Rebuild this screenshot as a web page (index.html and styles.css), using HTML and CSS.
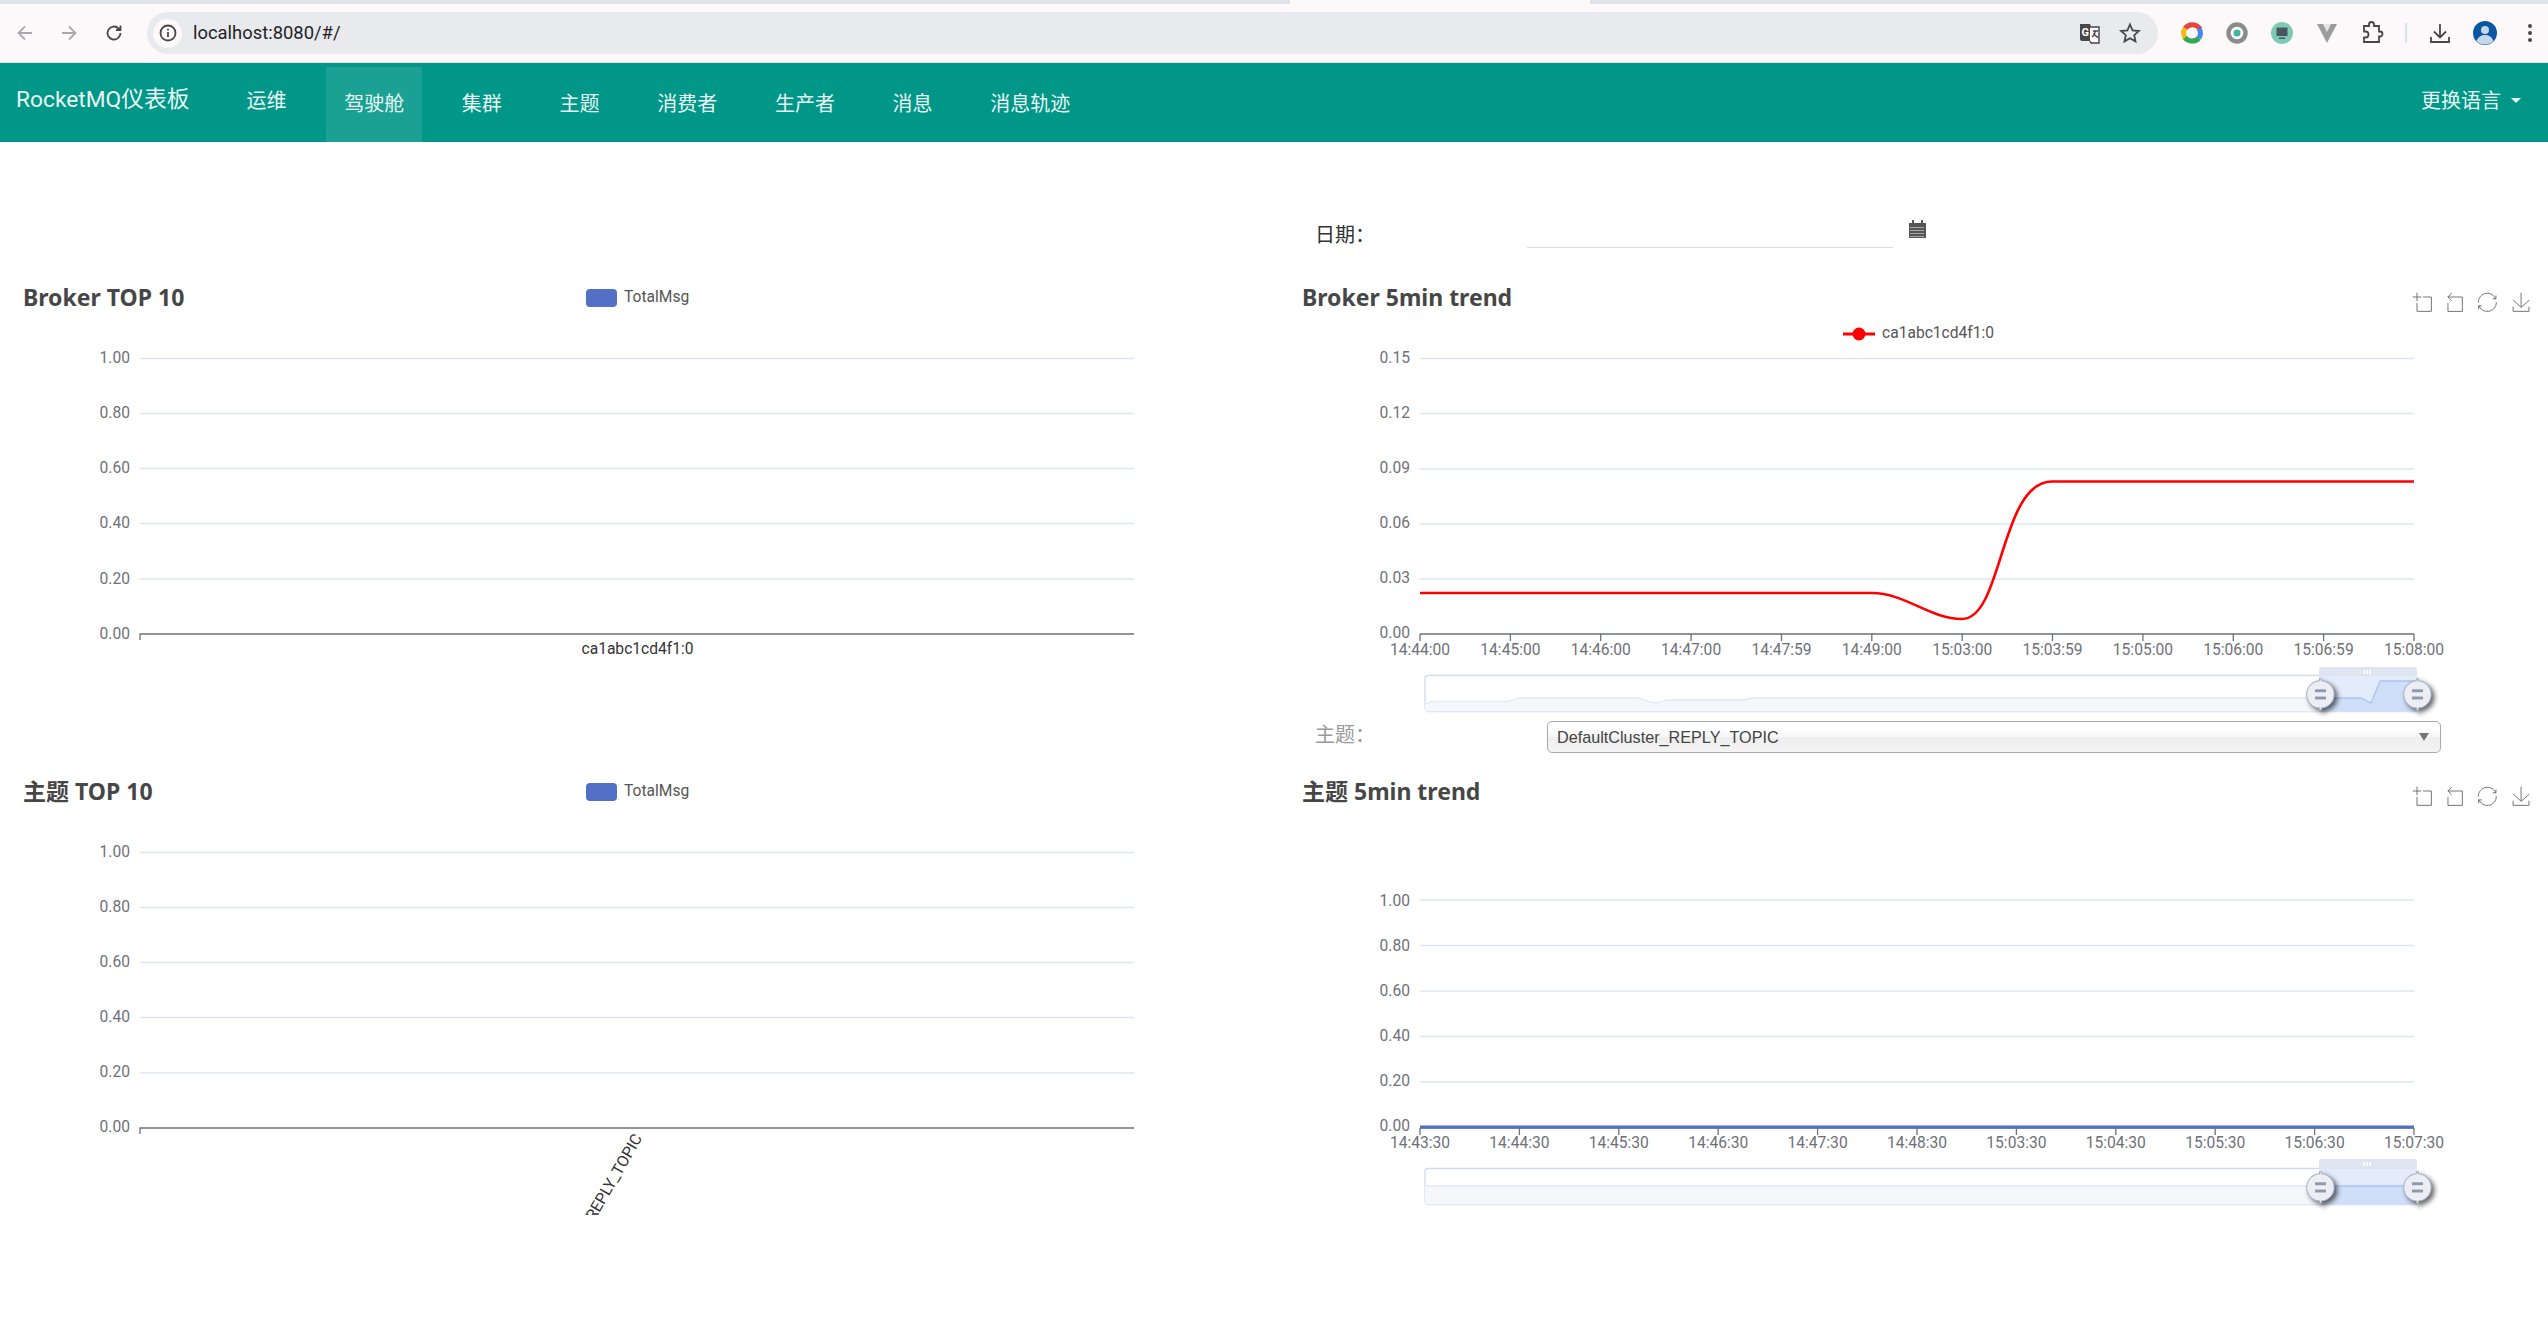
FILE: index.html
```html
<!DOCTYPE html>
<html lang="zh">
<head>
<meta charset="utf-8">
<title>RocketMQ仪表板</title>
<link rel="stylesheet" href="styles.css">
</head>
<body>
<svg class="defs" width="0" height="0" aria-hidden="true">
  <defs>
    <symbol id="tb-zoom" viewBox="-2 -2 62 62"><path d="M0,13.5h26.9 M13.5,26.9V0 M32.1,13.5H58V58H13.5 V32.1"/></symbol>
    <symbol id="tb-back" viewBox="-2 -2 62 62"><path d="M22,1.4L9.9,13.5l12.3,12.3 M10.3,13.5H54.9v44.6 H10.3v-26"/></symbol>
    <symbol id="tb-restore" viewBox="-2 -2 62 62"><path d="M47,18.9h9.8V8.7 M56.3,20.1 C52.1,9,40.5,0.6,26.8,2.1C12.6,3.7,1.6,16.2,2.1,30.6 M13,41.1H3.1v10.2 M3.7,39.9c4.2,11.1,15.8,19.5,29.5,18 c14.2-1.6,25.2-14.1,24.7-28.5"/></symbol>
    <symbol id="tb-save" viewBox="-2 -2 62 62"><path d="M4.7,22.9L29.3,45.5L54.7,23.4M4.6,43.6L4.6,58L53.8,58L53.8,43.6M29.2,45.1L29.2,0"/></symbol>
    <g id="dz-handle">
      <path d="M10.7,11.9v-1.3H9.3v1.3c-4.9,0.3-8.8,4.4-8.8,9.4c0,5,3.9,9.1,8.8,9.4v1.3h1.3v-1.3c4.9-0.3,8.8-4.4,8.8-9.4C19.5,16.3,15.6,12.2,10.7,11.9z"/>
      <rect class="handle-bar" x="6.2" y="17.800" width="7.6" height="2"/>
      <rect class="handle-bar" x="6.2" y="22.800" width="7.6" height="2"/>
    </g>
  </defs>
</svg>

<header class="browser">
  <div class="tabstrip"><div class="tabstrip-tab"></div></div>
  <div class="toolbar">
    <svg class="tool" viewBox="0 0 22 22"><path class="ic-muted" d="M18 11H5M11 4.500 4.500 11 11 17.500"/></svg>
    <svg class="tool" viewBox="0 0 22 22"><path class="ic-muted" d="M4 11h13M11 4.500 17.500 11 11 17.500"/></svg>
    <svg class="tool tool-reload" viewBox="0 0 22 22"><path class="ic-dark" d="M17.500 11a6.500 6.500 0 1 1-2-4.700L17.500 8M17.500 3.500V8H13"/></svg>
    <div class="omnibox">
      <span class="omnibox-info">
        <svg viewBox="0 0 20 20" width="20" height="20"><circle class="ic-dark" cx="10" cy="10" r="7.500"/><path class="ic-dark" d="M10 9v5M10 5.800v1.600"/></svg>
      </span>
      <span class="omnibox-url">localhost:8080/#/</span>
      <svg class="omnibox-icon" viewBox="0 0 24 24"><path class="ic-fill" d="M2 3h10l1 3h-1v14H4a2 2 0 0 1-2-2z"/><path class="ic-dark-thin" d="M12 6h9v16h-8l-1-2M15 10h5M17.500 10c-.5 3-2 5-3.500 6M15.500 12c.8 2 2.500 3.500 4.500 4.500"/><text class="translate-g" x="3.500" y="15">G</text></svg>
      <svg class="omnibox-icon omnibox-star" viewBox="0 0 24 24"><path class="ic-dark" d="M12 3.500l2.600 5.800 6.300.7-4.700 4.200 1.300 6.200L12 17.300l-5.500 3.100 1.300-6.200L3.100 10l6.300-.7z"/></svg>
    </div>
    <svg class="ext ext-first" viewBox="0 0 24 24">
      <path class="ring-red" d="M5 7.500A9 9 0 0 1 20 8"/>
      <path class="ring-yellow" d="M5 7a9 9 0 0 0 2 12"/>
      <path class="ring-green" d="M5 16.500A9 9 0 0 0 19 17"/>
      <path class="ring-blue" d="M19 7.500a9 9 0 0 1 0 9.500"/>
    </svg>
    <svg class="ext" viewBox="0 0 24 24"><circle class="ext-gray" cx="12" cy="12" r="8.500"/><circle class="ext-teal" cx="12" cy="12" r="3.500"/></svg>
    <svg class="ext" viewBox="0 0 24 24"><circle class="ext-mint" cx="12" cy="12" r="11"/><rect class="ext-screen" x="6.500" y="6.500" width="11" height="8.500"/><rect class="ext-screen" x="9" y="16.500" width="6" height="1.500"/></svg>
    <svg class="ext" viewBox="0 0 24 24"><path class="ext-v" d="M2 3h20L12 22z"/><path class="ext-v-inner" d="M8 3h8l-4 8z"/></svg>
    <svg class="ext" viewBox="0 0 24 24"><path class="ic-dark" d="M4 5h5V3.500a2.500 2.500 0 0 1 5 0V5h5v5.500h1a2.500 2.500 0 0 1 0 5h-1V21H4v-4.500h1.500a3 3 0 0 0 0-6H4z"/></svg>
    <span class="toolbar-sep"></span>
    <svg class="ext" viewBox="0 0 24 24"><path class="ic-dark" d="M12 3v13M6 10.500l6 6 6-6M3 16v5h18v-5"/></svg>
    <svg class="ext" viewBox="0 0 24 24"><circle class="avatar-bg" cx="12" cy="12" r="12"/><circle class="avatar-fg" cx="12" cy="9" r="4"/><path class="avatar-fg" d="M3.500 20c2-4.500 5-6 8.500-6s6.500 1.500 8.500 6a12 12 0 0 1-17 0z"/></svg>
    <svg class="ext" viewBox="0 0 24 24"><circle class="ic-dots" cx="12" cy="5" r="2"/><circle class="ic-dots" cx="12" cy="12" r="2"/><circle class="ic-dots" cx="12" cy="19" r="2"/></svg>
  </div>
</header>

<nav class="navbar">
  <a class="brand">RocketMQ仪表板</a>
  <ul class="nav-list">
    <li class="nav-item nav-item-raised">运维</li>
    <li class="nav-item nav-item-active">驾驶舱</li>
    <li class="nav-item">集群</li>
    <li class="nav-item">主题</li>
    <li class="nav-item">消费者</li>
    <li class="nav-item">生产者</li>
    <li class="nav-item">消息</li>
    <li class="nav-item">消息轨迹</li>
  </ul>
  <a class="lang">更换语言<span class="caret"></span></a>
</nav>

<main class="dashboard">
  <div class="date-row">
    <label class="date-label">日期：</label>
    <input class="date-input" type="text">
    <svg class="calendar" viewBox="0 0 17 18"><path class="cal-body" d="M0 3h3V0h2v3h7V0h2v3h3v15H0z"/><path class="cal-grid" d="M1.500 7.500h14M1.500 10.500h14M1.500 13.500h14M1.500 16.500h14" /></svg>
  </div>

  <section class="col">
    <svg class="chart" viewBox="0 270 1274 494" width="1274" height="494">
      <text class="title" x="23" y="297">Broker TOP 10</text>
      <rect class="legend-bar" x="586" y="289" width="31" height="18" rx="4"/>
      <text class="legend" x="624" y="297">TotalMsg</text>
      <path class="grid" d="M140 358.500H1134M140 413.500H1134M140 468.500H1134M140 523.500H1134M140 579H1134"/>
      <path class="axis" d="M140 640V634H1134"/>
      <g class="ylab">
        <text x="130" y="358">1.00</text><text x="130" y="413">0.80</text><text x="130" y="468">0.60</text>
        <text x="130" y="523">0.40</text><text x="130" y="579">0.20</text><text x="130" y="633.500">0.00</text>
      </g>
      <text class="cat" x="637.500" y="649">ca1abc1cd4f1:0</text>
    </svg>
    <svg class="chart" viewBox="0 764 1274 451" width="1274" height="451">
      <text class="title" x="23" y="791">主题 TOP 10</text>
      <rect class="legend-bar" x="586" y="783" width="31" height="18" rx="4"/>
      <text class="legend" x="624" y="791">TotalMsg</text>
      <path class="grid" d="M140 852.500H1134M140 907.500H1134M140 962.500H1134M140 1017.500H1134M140 1073H1134"/>
      <path class="axis" d="M140 1134V1128H1134"/>
      <g class="ylab">
        <text x="130" y="852">1.00</text><text x="130" y="906.500">0.80</text><text x="130" y="961.500">0.60</text>
        <text x="130" y="1016.500">0.40</text><text x="130" y="1071.500">0.20</text><text x="130" y="1126.500">0.00</text>
      </g>
      <text class="cat-rot" transform="rotate(-60 638 1135)" x="638" y="1135">DefaultCluster_REPLY_TOPIC</text>
    </svg>
  </section>

  <section class="col">
    <svg class="chart" viewBox="1274 270 1274 450" width="1274" height="450">
      <text class="title title-right" x="1302" y="297">Broker 5min trend</text>
      <g class="toolbox">
        <use href="#tb-zoom" x="2412" y="292" width="20" height="20"/>
        <use href="#tb-back" x="2444" y="292" width="20" height="20"/>
        <use href="#tb-restore" x="2477" y="292" width="20" height="20"/>
        <use href="#tb-save" x="2511" y="292" width="20" height="20"/>
      </g>
      <path class="legend-line" d="M1843 334H1875"/>
      <circle class="legend-dot" cx="1859" cy="334" r="6.500"/>
      <text class="legend" x="1882" y="333">ca1abc1cd4f1:0</text>
      <path class="grid" d="M1420 358.500H2414M1420 413.500H2414M1420 469H2414M1420 524H2414M1420 579H2414"/>
      <path class="axis" d="M1420 634H2414M1420 634v7M1510.400 634v7M1600.700 634v7M1691.100 634v7M1781.500 634v7M1871.800 634v7M1962.200 634v7M2052.500 634v7M2142.900 634v7M2233.300 634v7M2323.600 634v7M2414 634v7"/>
      <g class="ylab">
        <text x="1410" y="358">0.15</text><text x="1410" y="413">0.12</text><text x="1410" y="468">0.09</text>
        <text x="1410" y="523">0.06</text><text x="1410" y="578">0.03</text><text x="1410" y="633">0.00</text>
      </g>
      <g class="xlab">
        <text x="1420" y="650">14:44:00</text><text x="1510.400" y="650">14:45:00</text><text x="1600.700" y="650">14:46:00</text>
        <text x="1691.100" y="650">14:47:00</text><text x="1781.500" y="650">14:47:59</text><text x="1871.800" y="650">14:49:00</text>
        <text x="1962.200" y="650">15:03:00</text><text x="2052.500" y="650">15:03:59</text><text x="2142.900" y="650">15:05:00</text>
        <text x="2233.300" y="650">15:06:00</text><text x="2323.600" y="650">15:06:59</text><text x="2414" y="650">15:08:00</text>
      </g>
      <path class="series-red" d="M1420 593H1872C1905 593 1930 619 1962 619C2003 619 2000 481.500 2052 481.500H2414"/>
      <rect class="dz-frame" x="1425" y="675.500" width="992" height="36" rx="3"/>
      <path class="dz-area" d="M1425 704L1433 701.300H1509L1518 698H1639L1650 702L1657 703L1666 700H1743L1752 698H2320V711.500H1425Z"/>
      <path class="dz-line" d="M1425 704L1433 701.300H1509L1518 698H1639L1650 702L1657 703L1666 700H1743L1752 698H2320"/>
      <rect class="dz-window" x="2319" y="676" width="98" height="35.500"/>
      <path class="dz-area-sel" d="M2319 698H2361L2371 703L2380 681H2417V711.500H2319Z"/>
      <path class="dz-line-sel" d="M2319 698H2361L2371 703L2380 681H2417"/>
      <path class="dz-bar" d="M2319 676V670a3 3 0 0 1 3-3H2414a3 3 0 0 1 3 3V676Z"/>
      <path class="dz-grip" d="M2364 670v4M2367 670v4M2370 670v4"/>
      <use class="handle" href="#dz-handle" transform="translate(2306 663.500) scale(1.45)"/>
      <use class="handle" href="#dz-handle" transform="translate(2403 663.500) scale(1.45)"/>
    </svg>
    <div class="topic-row">
      <label class="topic-label">主题：</label>
      <div class="topic-select"><span>DefaultCluster_REPLY_TOPIC</span><span class="topic-arrow"></span></div>
    </div>
    <svg class="chart" viewBox="1274 764 1274 494" width="1274" height="494">
      <text class="title title-right" x="1302" y="791">主题 5min trend</text>
      <g class="toolbox">
        <use href="#tb-zoom" x="2412" y="786" width="20" height="20"/>
        <use href="#tb-back" x="2444" y="786" width="20" height="20"/>
        <use href="#tb-restore" x="2477" y="786" width="20" height="20"/>
        <use href="#tb-save" x="2511" y="786" width="20" height="20"/>
      </g>
      <path class="grid" d="M1420 900H2414M1420 945.500H2414M1420 991H2414M1420 1036.500H2414M1420 1082H2414"/>
      <path class="axis" d="M1420 1128H2414M1420 1128v7M1519.400 1128v7M1618.800 1128v7M1718.200 1128v7M1817.600 1128v7M1917 1128v7M2016.400 1128v7M2115.800 1128v7M2215.200 1128v7M2314.600 1128v7M2414 1128v7"/>
      <path class="series-blue" d="M1420 1127H2414"/>
      <g class="ylab">
        <text x="1410" y="901">1.00</text><text x="1410" y="945.500">0.80</text><text x="1410" y="990.500">0.60</text>
        <text x="1410" y="1035.500">0.40</text><text x="1410" y="1081">0.20</text><text x="1410" y="1126">0.00</text>
      </g>
      <g class="xlab">
        <text x="1420" y="1143">14:43:30</text><text x="1519.400" y="1143">14:44:30</text><text x="1618.800" y="1143">14:45:30</text>
        <text x="1718.200" y="1143">14:46:30</text><text x="1817.600" y="1143">14:47:30</text><text x="1917" y="1143">14:48:30</text>
        <text x="2016.400" y="1143">15:03:30</text><text x="2115.800" y="1143">15:04:30</text><text x="2215.200" y="1143">15:05:30</text>
        <text x="2314.600" y="1143">15:06:30</text><text x="2414" y="1143">15:07:30</text>
      </g>
      <rect class="dz-frame" x="1425" y="1168.500" width="992" height="36" rx="3"/>
      <rect class="dz-area" x="1425" y="1186" width="895" height="18.500"/>
      <path class="dz-line" d="M1425 1186H2320"/>
      <rect class="dz-window" x="2319" y="1168.500" width="98" height="36"/>
      <rect class="dz-area-sel" x="2319" y="1186" width="98" height="18.500"/>
      <path class="dz-line-sel" d="M2319 1186H2417"/>
      <path class="dz-bar" d="M2319 1168.500V1162a3 3 0 0 1 3-3H2414a3 3 0 0 1 3 3V1168.500Z"/>
      <path class="dz-grip" d="M2364 1162v4M2367 1162v4M2370 1162v4"/>
      <use class="handle" href="#dz-handle" transform="translate(2306 1156.500) scale(1.45)"/>
      <use class="handle" href="#dz-handle" transform="translate(2403 1156.500) scale(1.45)"/>
    </svg>
  </section>
</main>
</body>
</html>
```

FILE: styles.css
```css
* { box-sizing: border-box; }
html, body { margin: 0; padding: 0; background: #fff; }
body { font-family: Roboto, "Noto Sans CJK SC", sans-serif; color: #333; overflow: hidden; }
.defs { position: absolute; }

/* browser chrome */
.browser { height: 63px; background: #fdf8f9; border-bottom: 1px solid #e6e6ea; }
.tabstrip { height: 4px; background: #dfe3ea; }
.tabstrip-tab { width: 300px; height: 4px; margin-left: 1290px; background: #fdf8f9; }
.toolbar { height: 58px; display: flex; align-items: center; padding-left: 14px; gap: 22px; }
.tool { width: 22px; height: 22px; flex: none; }
.tool-reload { margin-left: 1px; margin-right: 0; }
.omnibox { width: 2011px; height: 42px; flex: none; border-radius: 21px; background: #e9eaee; display: flex; align-items: center; padding-left: 6px; }
.omnibox-info { width: 29px; height: 29px; border-radius: 50%; background: #fdf8f9; display: flex; align-items: center; justify-content: center; }
.omnibox-url { margin-left: 11px; font: 400 18.400px/1 Roboto, sans-serif; color: #1f1f1f; flex: 1; }
.omnibox-icon { width: 24px; height: 24px; flex: none; }
.omnibox-star { margin-left: 16px; margin-right: 16.500px; }
.ext { width: 24px; height: 24px; flex: none; margin-left: -1px; }
.ext-first { margin-left: 0; }
.toolbar-sep { width: 2px; height: 20px; background: #d5e1f5; flex: none; margin-left: -1px; }
.ic-muted { fill: none; stroke: #a9a9ad; stroke-width: 1.800; }
.ic-dark { fill: none; stroke: #474747; stroke-width: 1.800; }
.ic-dark-thin { fill: #fdf8f9; stroke: #474747; stroke-width: 1.400; }
.ic-fill { fill: #474747; }
.ic-dots { fill: #474747; }
.translate-g { font: 700 11px Roboto, sans-serif; fill: #fff; }
.ring-red, .ring-yellow, .ring-green, .ring-blue { fill: none; stroke-width: 5; }
.ring-red { stroke: #e2483d; }
.ring-yellow { stroke: #f5b916; }
.ring-green { stroke: #33a853; }
.ring-blue { stroke: #4586f4; }
.ext-gray { fill: #fff; stroke: #8c8c8c; stroke-width: 4.500; }
.ext-teal { fill: #41b3a3; }
.ext-mint { fill: #7ecbb5; }
.ext-screen { fill: #4a5560; }
.ext-v { fill: #9c9c9c; }
.ext-v-inner { fill: #e4e4e4; }
.avatar-bg { fill: #0b57a4; }
.avatar-fg { fill: #c5d7ea; }

/* navbar */
.navbar { height: 79px; background: #009688; color: #e8f6f4; display: flex; align-items: flex-end; }
.brand { align-self: flex-start; margin: 20px 0 0 16px; font: 400 22.750px/34px Roboto, "Noto Sans CJK SC", sans-serif; }
.nav-list { list-style: none; margin: 0 0 0 39px; padding: 0; display: flex; gap: 21.700px; height: 75px; }
.nav-item { height: 75px; padding: 0 18px; font: 400 20px/72px "Noto Sans CJK SC", sans-serif; }
.nav-item-raised { line-height: 66px; }
.nav-item-active { background: #1aa193; }
.lang { margin-left: auto; align-self: flex-start; margin-top: 22px; padding-right: 27px; font: 400 20px/30px "Noto Sans CJK SC", sans-serif; display: flex; align-items: center; }
.caret { width: 0; height: 0; margin-left: 10px; border: 5px solid transparent; border-top-color: #e8f6f4; border-bottom-width: 0; }

/* dashboard */
.dashboard { display: grid; grid-template-columns: 1274px 1274px; grid-template-rows: 128px auto; }
.date-row { grid-column: 2; display: flex; align-items: flex-start; padding: 70px 0 0 41px; }
.date-label { width: 212px; margin-top: 10px; font: 400 20px/24px "Noto Sans CJK SC", sans-serif; color: #333; }
.date-input { width: 366px; height: 36px; border: 0; border-bottom: 1px solid #d8dce6; background: transparent; outline: none; }
.calendar { width: 17px; height: 18px; margin: 8px 0 0 16px; }
.cal-body { fill: #555; }
.cal-grid { fill: none; stroke: #fff; stroke-width: 1; stroke-dasharray: 1 1; }
.col { display: flex; flex-direction: column; grid-row: 2; }
.chart { display: block; flex: none; }

/* chart parts */
.title { font: 700 23px "Noto Sans", "Noto Sans CJK SC", sans-serif; fill: #464646; dominant-baseline: central; }
.legend { font: 400 15.600px Roboto, sans-serif; fill: #555; dominant-baseline: central; }
.legend-bar { fill: #5470c6; }
.legend-line { stroke: #f00; stroke-width: 3; }
.legend-dot { fill: #f00; }
.grid { fill: none; stroke: #e0e6f1; stroke-width: 1.300; }
.axis { fill: none; stroke: #6e7079; stroke-width: 1.300; }
.ylab text { font: 400 15.600px Roboto, sans-serif; fill: #6e7079; text-anchor: end; dominant-baseline: central; }
.xlab text { font: 400 15.600px Roboto, sans-serif; fill: #6e7079; text-anchor: middle; dominant-baseline: central; }
.cat { font: 400 15.600px Roboto, sans-serif; fill: #333; text-anchor: middle; dominant-baseline: central; }
.cat-rot { font: 400 15.800px Roboto, sans-serif; fill: #333; text-anchor: end; dominant-baseline: central; }
.toolbox { fill: none; stroke: #666; stroke-width: 2.800; }
.series-red { fill: none; stroke: #f00; stroke-width: 2.600; }
.series-blue { fill: none; stroke: #4f6fc8; stroke-width: 3.200; }
.dz-frame { fill: #fff; stroke: #d2dbee; stroke-width: 1.300; }
.dz-area { fill: #f5f7fb; }
.dz-line { fill: none; stroke: #e3e8f3; stroke-width: 1.300; }
.dz-window { fill: #e4ecfc; }
.dz-area-sel { fill: #cfdff9; }
.dz-line-sel { fill: none; stroke: #a9c5f4; stroke-width: 1.300; }
.dz-bar { fill: #dfe4f1; }
.dz-grip { fill: none; stroke: #fff; stroke-width: 1.500; }
.handle { fill: #eceef3; stroke: #a8b3c7; stroke-width: .7; filter: drop-shadow(2px 2px 2px rgba(0,0,0,.6)); }
.handle-bar { fill: #8f99ae; stroke: none; }

/* topic select */
.topic-row { height: 44px; display: flex; align-items: flex-start; padding: 1px 0 0 41px; }
.topic-label { width: 232px; font: 400 20px/26px "Noto Sans CJK SC", sans-serif; color: #999; }
.topic-select { width: 894px; height: 32px; padding: 0 9px; border: 1px solid #aaa; border-radius: 5px; background: linear-gradient(#fff 20%, #f6f6f6 50%, #eee 52%, #f4f4f4); font: 400 16.200px/31px "Liberation Sans", Arial, sans-serif; color: #444; display: flex; justify-content: space-between; align-items: center; }
.topic-arrow { width: 0; height: 0; border: 5px solid transparent; border-top: 8px solid #777; border-bottom-width: 0; margin-right: 2px; }
```
